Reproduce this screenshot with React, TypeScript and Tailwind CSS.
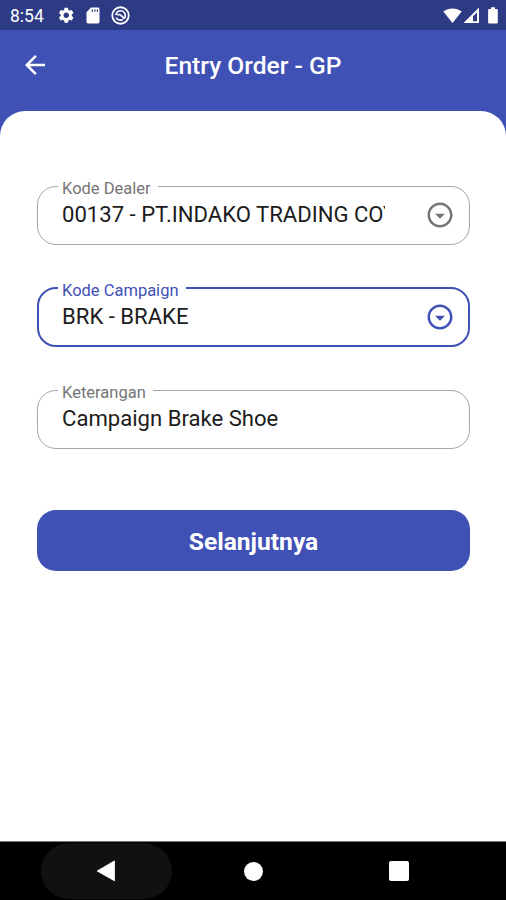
import type { ReactNode } from 'react';
import { MdArrowBack, MdOutlineArrowDropDownCircle, MdSettings } from 'react-icons/md';

function StatusBar() {
  return (
    <div className="flex h-[30px] shrink-0 items-center bg-[#2d3a84] pr-[7px] pl-[10px] text-white">
      <span className="mt-[2px] w-[47px] text-[17.5px] leading-[20px]">8:54</span>
      <MdSettings className="mt-[1px] h-[18.5px] w-[18.5px]" />
      <svg className="mt-[1px] ml-[10.5px]" width="14" height="17" viewBox="0 0 14 17" fill="currentColor">
        <path
          fillRule="evenodd"
          d="M5 0.6H12Q13.5 0.6 13.5 2V15Q13.5 16.4 12 16.4H2Q0.5 16.4 0.5 15V5.2ZM5.6 2.5V4.7H6.9V2.5ZM8.2 2.5V4.7H9.5V2.5ZM10.8 2.5V4.7H12V2.5Z"
        />
      </svg>
      <svg className="mt-[1px] ml-[10.5px]" width="19" height="19" viewBox="0 0 18 18" fill="none" stroke="currentColor">
        <circle cx="9" cy="9" r="7.8" strokeWidth="1.7" />
        <path d="M4.6 8.6C5.2 5.9 7 4.5 9.2 4.5C11.8 4.5 13.6 6.6 13.5 9.2C13.5 10.2 13.2 11.2 12.7 12" strokeWidth="1.6" />
        <path d="M4.8 11C6.2 13.4 9.4 14 11.3 12.8M6 8.6C8 7.2 9.5 8.4 12.7 12" strokeWidth="1.6" />
      </svg>
      <svg className="ml-auto" width="19" height="17" viewBox="0 0 19 17" fill="currentColor">
        <path d="M0.3 4.4C5.6 0.4 13.4 0.4 18.7 4.4L9.5 16Z" />
      </svg>
      <svg className="mt-[1px] ml-[1px]" width="17" height="17" viewBox="0 0 17 17" fill="currentColor">
        <path fillRule="evenodd" d="M16 0.5V16H0.5ZM14 5.3L10 9.3V14.2H14Z" />
      </svg>
      <svg className="mt-[1px] ml-[7px]" width="12" height="17" viewBox="0 0 12 17" fill="currentColor">
        <path d="M4 0.3H8V2H9.7Q10.8 2 10.8 3.1V15.4Q10.8 16.5 9.7 16.5H2.2Q1.1 16.5 1.1 15.4V3.1Q1.1 2 2.2 2H4Z" />
      </svg>
    </div>
  );
}

function Header() {
  return (
    <header className="grid h-[81px] shrink-0 grid-cols-[70px_1fr_70px] bg-[#3f51b5] pb-[10px] text-white">
      <button className="flex items-center pb-[2px] pl-[20px]" aria-label="Back">
        <MdArrowBack className="h-[30px] w-[30px]" />
      </button>
      <h1 className="flex items-center justify-center pt-[1px] text-[24.6px] font-medium">Entry Order - GP</h1>
    </header>
  );
}

type FieldProps = { label: string; active?: boolean; dropdown?: boolean; children: ReactNode };

function Field({ label, active, dropdown, children }: FieldProps) {
  return (
    <fieldset
      className={`h-[70px] w-full min-w-0 rounded-[19px] ${
        active
          ? 'border-2 border-[#3f51b5] pr-[13px] pl-[19px] text-[#3f51b5]'
          : 'border border-[#a6a6a6] pr-[14px] pl-[20px] text-[#757575]'
      }`}
    >
      <legend className="h-[22px] pt-[3px] pr-[7px] pl-[4px] text-[16.5px] leading-[22px]">{label}</legend>
      <div className="flex h-[34px] items-center pl-[4px]">
        <span className="w-[323px] overflow-hidden text-[22.1px] leading-[30px] whitespace-nowrap text-[#1c1c1c]">
          {children}
        </span>
        {dropdown && <MdOutlineArrowDropDownCircle className="mt-[1px] ml-auto h-[30px] w-[30px] shrink-0" />}
      </div>
    </fieldset>
  );
}

function NavigationBar() {
  return (
    <nav className="flex h-[59px] shrink-0 items-center border-t border-[#777777] bg-black pl-[41px] text-white">
      <div className="flex h-[56px] w-[131px] items-center justify-center rounded-[28px] bg-[#111111]">
        <svg className="mr-[2px]" width="20" height="22" viewBox="0 0 20 22" fill="currentColor">
          <path d="M1.3 10.4L18 0.8Q18.9 0.4 18.9 1.4V20.4Q18.9 21.4 18 20.9L1.3 11.4Q0.5 10.9 1.3 10.4Z" />
        </svg>
      </div>
      <div className="ml-[72px] h-[19px] w-[19px] rounded-full bg-white" />
      <div className="ml-[126px] h-[20px] w-[20px] rounded-[2px] bg-white" />
    </nav>
  );
}

export default function App() {
  return (
    <div className="flex h-[900px] w-[506px] flex-col overflow-hidden bg-[#3f51b5] font-['Roboto',sans-serif]">
      <StatusBar />
      <Header />
      <main className="flex flex-1 flex-col rounded-t-[25px] bg-white pr-[36px] pl-[37px] pt-[64px]">
        <div className="flex flex-col gap-[32px]">
          <Field label="Kode Dealer" dropdown>
            00137 - PT.INDAKO TRADING COY
          </Field>
          <Field label="Kode Campaign" active dropdown>
            BRK - BRAKE
          </Field>
          <Field label="Keterangan">Campaign Brake Shoe</Field>
        </div>
        <button className="mt-[61px] h-[61px] w-full rounded-[19px] bg-[#3f51b5] pt-[3px] text-[24.6px] font-bold text-white">
          Selanjutnya
        </button>
      </main>
      <NavigationBar />
    </div>
  );
}
